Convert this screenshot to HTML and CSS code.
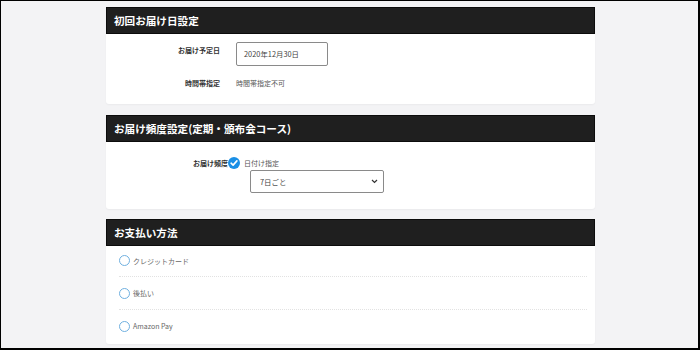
FILE: index.html
```html
<!DOCTYPE html>
<html lang="ja">
<head>
    <meta charset="UTF-8">
    <title>ご注文手続き</title>
    <link rel="stylesheet" href="styles.css">
</head>
<body>
    <div class="frame">
        <section class="card">
            <h2 class="card-head">初回お届け日設定</h2>
            <div class="card-body date-body">
                <div class="form-row">
                    <span class="label">お届け予定日</span>
                    <div class="text-box">2020年12月30日</div>
                </div>
                <div class="form-row">
                    <span class="label">時間帯指定</span>
                    <span class="value">時間帯指定不可</span>
                </div>
            </div>
        </section>

        <section class="card">
            <h2 class="card-head">お届け頻度設定(定期・頒布会コース)</h2>
            <div class="card-body freq-body">
                <div class="freq-row">
                    <span class="label freq-label">お届け頻度</span>
                    <svg class="check" width="12" height="12" viewBox="0 0 12 12">
                        <circle cx="6" cy="6" r="6" fill="#1a8fe6"/>
                        <path d="M3.1 6.2 L5.1 8.1 L8.9 3.9" fill="none" stroke="#fff" stroke-width="1.6" stroke-linecap="round" stroke-linejoin="round"/>
                    </svg>
                    <span class="value">日付け指定</span>
                </div>
                <div class="select-box">
                    <span>7日ごと</span>
                    <svg width="7" height="5" viewBox="0 0 7 5">
                        <path d="M1 1 L3.5 3.5 L6 1" fill="none" stroke="#333" stroke-width="1.2"/>
                    </svg>
                </div>
            </div>
        </section>

        <section class="card">
            <h2 class="card-head">お支払い方法</h2>
            <ul class="pay-list">
                <li class="pay-item"><span class="radio"></span>クレジットカード</li>
                <li class="pay-item"><span class="radio"></span>後払い</li>
                <li class="pay-item"><span class="radio"></span>Amazon Pay</li>
            </ul>
        </section>
    </div>
</body>
</html>
```

FILE: styles.css
```css
body {
    margin: 0;
    font-family: "Noto Sans CJK JP", "Liberation Sans", sans-serif;
}
.frame {
    box-sizing: border-box;
    width: 700px;
    height: 350px;
    overflow: hidden;
    border: 1px solid #000;
    border-right-width: 2px;
    border-bottom-width: 2px;
    background: #f3f3f5;
    padding-top: 6px;
}
.card {
    width: 489px;
    margin: 0 0 11px 105px;
    background: #fff;
    border-radius: 0 0 3px 3px;
    box-shadow: 0 1px 2px rgba(0,0,0,0.04);
}
.card + .card + .card {
    margin-top: -1px;
}
.card-head {
    box-sizing: border-box;
    height: 27px;
    margin: 0;
    padding-left: 7px;
    display: flex;
    align-items: center;
    background: #1f1f1f;
    border: 1px solid #0c0c0c;
    color: #fff;
    font-size: 10.6px;
    font-weight: bold;
}
.card-body {
    font-size: 7px;
}
.label {
    font-weight: bold;
    color: #333;
}
.value {
    color: #555;
}
.date-body {
    padding: 8px 0 16px;
}
.form-row {
    display: grid;
    grid-template-columns: 114px auto;
    column-gap: 16px;
    align-items: start;
    line-height: 10px;
}
.form-row + .form-row {
    margin-top: 12px;
}
.form-row .label {
    text-align: right;
}
.form-row:first-child .label {
    padding-top: 3px;
}
.text-box {
    box-sizing: border-box;
    width: 92px;
    height: 24px;
    border: 1px solid #8a8a8a;
    border-radius: 2px;
    padding-left: 7px;
    display: flex;
    align-items: center;
    font-size: 7.4px;
    color: #444;
}
.freq-body {
    padding: 15px 0 16px;
}
.freq-row {
    display: flex;
    align-items: center;
    line-height: 10px;
}
.freq-label {
    width: 122px;
    text-align: right;
}
.check {
    margin: 0 4px 0 0;
}
.select-box {
    box-sizing: border-box;
    width: 134px;
    height: 23px;
    margin: 1px 0 0 144px;
    border: 1px solid #8a8a8a;
    border-radius: 2px;
    padding: 0 5px 0 9px;
    display: flex;
    align-items: center;
    justify-content: space-between;
    font-size: 7.4px;
    color: #444;
}
.pay-list {
    list-style: none;
    margin: 0;
    padding: 0 8px 2px 13px;
    font-size: 7px;
    color: #666;
}
.pay-item {
    height: 32px;
    display: flex;
    align-items: center;
    border-top: 1px dotted #e2e2e2;
}
.pay-item:first-child {
    height: 29px;
    padding-bottom: 1px;
    border-top: none;
}
.radio {
    box-sizing: border-box;
    width: 11px;
    height: 11px;
    margin-right: 3px;
    border: 1.5px solid #6fb0e0;
    border-radius: 50%;
}
```
